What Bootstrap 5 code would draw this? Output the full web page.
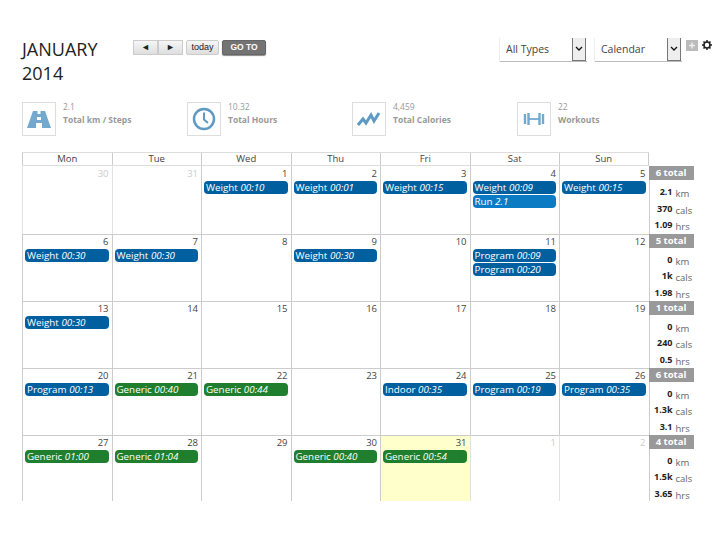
<!DOCTYPE html>
<html lang="en">
<head>
    <meta charset="UTF-8">
    <title>Calendar</title>
    <link href="https://cdn.jsdelivr.net/npm/bootstrap@5.3.0/dist/css/bootstrap.min.css" rel="stylesheet">
    <style>
        body { font-family: "Open Sans", "Liberation Sans", sans-serif; background: #fff; color: #333; }
        .page-box { width: 720px; height: 540px; padding: 38px 0 0 22px; overflow: hidden; }
        .top-bar { height: 64px; }
        .month-title { width: 111px; margin: -1px 0 0; font-size: 18px; line-height: 24px; font-weight: 400; color: #222; }
        .cal-btn { height: 15px; margin-top: 2px; border: 1px solid #ccc; border-radius: 2px; background: linear-gradient(#f6f6f6, #dedede); color: #222; font-family: "Liberation Sans", sans-serif; font-size: 9px; line-height: 13px; text-align: center; padding: 0; }
        .arrow-btn { width: 25px; border-radius: 0; }
        .today-btn { width: 33px; margin-left: 3px; }
        .goto-btn { width: 44px; margin-left: 3px; background: #737373; border-color: #666; color: #fff; font-weight: 700; font-size: 8.5px; box-shadow: 0 1px 1px #888; }
        .select-box { width: 87px; height: 24px; margin-right: 8px; }
        .type-select { display: block; width: 87px; height: 24px; appearance: none; border: 0; border-bottom: 1px solid #bbb; border-radius: 0; box-shadow: -1px 0 0 #eee; background: #fff; color: #444; font-family: inherit; font-size: 10.5px; padding: 1px 0 0 6px; }
        .select-arrow { position: absolute; top: 0; right: 1px; width: 14px; height: 23px; border: 1px solid #777; border-top: 0; background: #eee; display: flex; align-items: center; justify-content: center; pointer-events: none; }
        .tool-icons { margin: 2px 0 0 -4px; gap: 4px; }
        .stats-row { height: 50px; }
        .stat-item { width: 165px; }
        .stat-icon { width: 34px; height: 34px; border: 1px solid #ddd; display: flex; align-items: center; justify-content: center; }
        .stat-text { margin: -2px 0 0 7px; font-size: 8.5px; line-height: 13px; color: #999; }
        .stat-text b { display: block; color: #999; font-weight: 700; }
        .cal-grid { display: grid; grid-template-columns: repeat(7, 89.5px) 45px; grid-template-rows: 14px 67.5px; grid-auto-rows: 67.1px; width: 672px; height: 349px; overflow: hidden; }
        .cal-head { grid-column: 1 / 8; display: grid; grid-template-columns: repeat(7, 89.5px); height: 14px; width: 627px; border-top: 1px solid #ddd; border-bottom: 1px solid #ddd; }
        .cal-head div { border-left: 1px solid #ccc; font-size: 9.5px; line-height: 12px; text-align: center; color: #444; }
        .cal-head div:last-child { border-right: 1px solid #ccc; }
        .day-cell { border-top: 1px solid #ccc; border-left: 1px solid #ccc; }
        .day-cell.is-other { border-left-color: #e2e2e2; }
        .day-cell.is-today { background: #ffffcc; }
        .first-week { border-top: 0; padding-top: 1px; }
        .day-num { font-size: 9.5px; line-height: 13px; text-align: right; padding-right: 3px; color: #444; }
        .is-other .day-num { color: #ccc; }
        .cal-event { height: 13px; margin: 1px 3px 1px 2px; border-radius: 4px; color: #fff; font-size: 9.8px; line-height: 13px; padding-left: 2px; white-space: nowrap; overflow: hidden; }
        .ev-blue { background: #00609f; }
        .ev-light { background: #0b7bc4; }
        .ev-green { background: #1f7f2e; }
        .week-sum { border-left: 1px solid #ccc; }
        .sum-badge { width: 45px; height: 14px; margin-left: -1px; background: #999; color: #fff; font-weight: 700; font-size: 9.5px; line-height: 14px; text-align: center; }
        .sum-line { display: flex; height: 16.5px; font-size: 9px; line-height: 13px; color: #666; }
        .sum-line b { width: 23px; text-align: right; color: #222; }
        .sum-line span { margin-left: 3px; padding-top: 2px; font-size: 9.5px; }
        .sum-list { padding-top: 5px; }
    </style>
</head>
<body>

<div class="page-box">
    <!-- Header -->
    <div class="top-bar d-flex align-items-start">
        <h1 class="month-title">JANUARY 2014</h1>
        <button class="cal-btn arrow-btn">&#9668;</button>
        <button class="cal-btn arrow-btn">&#9658;</button>
        <button class="cal-btn today-btn">today</button>
        <button class="cal-btn goto-btn">GO TO</button>
        <div class="ms-auto d-flex">
            <div class="select-box position-relative">
                <select class="type-select"><option>All Types</option></select>
                <span class="select-arrow"><svg width="8" height="6" viewBox="0 0 8 6"><path d="M1 1l3 3 3-3" fill="none" stroke="#111" stroke-width="1.3"/></svg></span>
            </div>
            <div class="select-box position-relative">
                <select class="type-select"><option>Calendar</option></select>
                <span class="select-arrow"><svg width="8" height="6" viewBox="0 0 8 6"><path d="M1 1l3 3 3-3" fill="none" stroke="#111" stroke-width="1.3"/></svg></span>
            </div>
            <div class="tool-icons d-flex me-2">
                <svg width="12" height="11" viewBox="0 0 12 11"><rect width="12" height="11" fill="#bbb"/><path d="M6 2.5v6M3 5.500h6" stroke="#eee" stroke-width="1.500"/></svg>
                <svg width="10" height="10" viewBox="0 0 10 10"><circle cx="5" cy="5" r="3" fill="none" stroke="#222" stroke-width="1.600"/><path d="M5 0v2M5 8v2M0 5h2M8 5h2M1.500 1.500l1.400 1.400M7.100 7.100l1.400 1.400M1.500 8.500l1.400-1.400M7.100 2.900l1.400-1.400" stroke="#222" stroke-width="1.500"/></svg>
            </div>
        </div>
    </div>

    <!-- Totals -->
    <div class="stats-row d-flex">
        <div class="stat-item d-flex">
            <div class="stat-icon"><svg width="24" height="17" viewBox="0 0 24 17"><path d="M6 0h4.500v3h3V0H18l6 17h-9v-5H9v5H0zM10 6v3h4V6z" fill="#74a9cf" fill-rule="evenodd"/></svg></div>
            <div class="stat-text">2.1<b>Total km / Steps</b></div>
        </div>
        <div class="stat-item d-flex">
            <div class="stat-icon"><svg width="24" height="24" viewBox="0 0 24 24"><circle cx="12" cy="12" r="10" fill="none" stroke="#5f9ac2" stroke-width="2.500"/><path d="M12 5.500v7l4 3.500" fill="none" stroke="#5f9ac2" stroke-width="2"/></svg></div>
            <div class="stat-text">10.32<b>Total Hours</b></div>
        </div>
        <div class="stat-item d-flex">
            <div class="stat-icon"><svg width="24" height="16" viewBox="0 0 24 16"><path d="M1 14l5-6 3 4 5-8 3 6 5-8" fill="none" stroke="#5f9ac2" stroke-width="3"/></svg></div>
            <div class="stat-text">4,459<b>Total Calories</b></div>
        </div>
        <div class="stat-item d-flex">
            <div class="stat-icon"><svg width="24" height="16" viewBox="0 0 24 16"><path d="M3 3v10M6.500 2v12M17.500 2v12M21 3v10" stroke="#74a9cf" stroke-width="2.400"/><path d="M6 8h12" stroke="#74a9cf" stroke-width="1.800"/></svg></div>
            <div class="stat-text">22<b>Workouts</b></div>
        </div>
    </div>

    <!-- Calendar -->
    <div class="cal-grid" id="cal-grid"></div>
</div>

<script>
    const DAY_NAMES = ['Mon', 'Tue', 'Wed', 'Thu', 'Fri', 'Sat', 'Sun'];
    const W = (t) => ['ev-blue', 'Weight', t];
    const P = (t) => ['ev-blue', 'Program', t];
    const G = (t) => ['ev-green', 'Generic', t];

    const events = {
        1: [W('00:10')], 2: [W('00:01')], 3: [W('00:15')], 4: [W('00:09'), ['ev-light', 'Run', '2.1']], 5: [W('00:15')],
        6: [W('00:30')], 7: [W('00:30')], 9: [W('00:30')], 11: [P('00:09'), P('00:20')],
        13: [W('00:30')],
        20: [P('00:13')], 21: [G('00:40')], 22: [G('00:44')], 24: [['ev-blue', 'Indoor', '00:35']], 25: [P('00:19')], 26: [P('00:35')],
        27: [G('01:00')], 28: [G('01:04')], 30: [G('00:40')], 31: [G('00:54')]
    };
    const weeks = [
        ['6 total', '2.1', '370', '1.09'],
        ['5 total', '0', '1k', '1.98'],
        ['1 total', '0', '240', '0.5'],
        ['6 total', '0', '1.3k', '3.1'],
        ['4 total', '0', '1.5k', '3.65']
    ];

    let html = '<div class="cal-head">' + DAY_NAMES.map(d => `<div>${d}</div>`).join('') + '</div><div></div>';
    let num = 30;
    let month = 0;
    weeks.forEach((week, w) => {
        for (let i = 0; i < 7; i++) {
            if (month === 0 && num > 31) { num = 1; month = 1; }
            else if (month === 1 && num > 31) { num = 1; month = 2; }
            const cur = month === 1;
            const evs = cur && events[num] ? events[num] : [];
            const cls = (cur ? '' : ' is-other') + (cur && num === 31 ? ' is-today' : '') + (w === 0 ? ' first-week' : '');
            html += `<div class="day-cell${cls}"><div class="day-num">${num}</div>`
                + evs.map(e => `<div class="cal-event ${e[0]}">${e[1]} <i>${e[2]}</i></div>`).join('')
                + '</div>';
            num++;
        }
        html += `<div class="week-sum"><div class="sum-badge">${week[0]}</div><div class="sum-list">`
            + `<div class="sum-line"><b>${week[1]}</b><span>km</span></div>`
            + `<div class="sum-line"><b>${week[2]}</b><span>cals</span></div>`
            + `<div class="sum-line"><b>${week[3]}</b><span>hrs</span></div>`
            + '</div></div>';
    });
    document.getElementById('cal-grid').innerHTML = html;
</script>
<script src="https://cdn.jsdelivr.net/npm/bootstrap@5.3.0/dist/js/bootstrap.bundle.min.js"></script>
</body>
</html>
